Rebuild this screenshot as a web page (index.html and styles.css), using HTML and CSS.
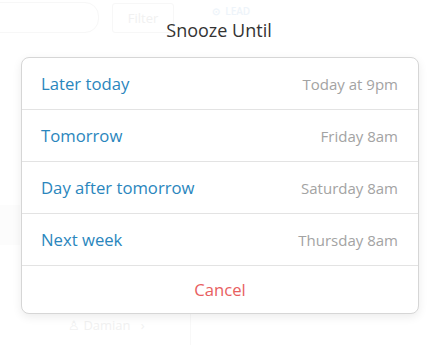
FILE: index.html
```html
<!DOCTYPE html>
<html>
<head>
<meta charset="utf-8">
<link rel="stylesheet" href="styles.css">
</head>
<body>
<div class="ghost">
  <div class="ghost-search"></div>
  <div class="ghost-filter">Filter</div>
  <div class="ghost-lead">⊙ &nbsp;LEAD</div>
  <div class="ghost-damian">♙ Damian &nbsp;&nbsp;›</div>
  <div class="ghost-vline2"></div>
  <div class="ghost-shade"></div>
</div>
<div class="sheet">
  <h1 class="title">Snooze Until</h1>
  <div class="card">
    <div class="row"><span class="label">Later today</span><span class="time">Today at 9pm</span></div>
    <div class="row"><span class="label">Tomorrow</span><span class="time">Friday 8am</span></div>
    <div class="row"><span class="label">Day after tomorrow</span><span class="time">Saturday 8am</span></div>
    <div class="row"><span class="label">Next week</span><span class="time">Thursday 8am</span></div>
    <div class="cancel">Cancel</div>
  </div>
</div>
</body>
</html>
```
FILE: styles.css
```css
html, body {
  margin: 0;
  padding: 0;
  background: #fff;
  width: 436px;
  height: 345px;
  overflow: hidden;
  font-family: "Open Sans", "Noto Sans", sans-serif;
}
body { position: relative; }
.ghost { position: absolute; inset: 0; }
.ghost-search {
  position: absolute; left: -20px; top: 2px; width: 119px; height: 31px;
  border: 1px solid #f7f7f7; border-radius: 14px; box-sizing: border-box;
}
.ghost-filter {
  position: absolute; left: 112px; top: 3px; width: 62px; height: 30px;
  border: 1px solid #f7f7f7; border-radius: 3px; box-sizing: border-box;
  color: #f1f1f1; font-size: 13px; line-height: 28px; text-align: center;
}
.ghost-lead {
  position: absolute; left: 212px; top: 4px; color: #eef4fa; font-size: 10px; font-weight: 600;
}
.ghost-damian {
  position: absolute; left: 68px; top: 316px; color: #f1f1f1; font-size: 13px;
}
.ghost-vline2 { position: absolute; left: 190px; top: 314px; width: 1px; height: 31px; background: #f8f8f8; }
.ghost-shade { position: absolute; left: 0; top: 205px; width: 20px; height: 40px; background: #fcfcfc; }

.sheet {
  position: relative;
  display: flex;
  flex-direction: column;
  align-items: center;
  padding-top: 18px;
  padding-left: 4px;
}
.title {
  margin: 0 0 15px -2px;
  font-size: 18px;
  font-weight: 500;
  color: #333;
  line-height: 24px;
}
.card {
  width: 398px;
  box-sizing: border-box;
  background: #fff;
  border: 1px solid #d6d6d6;
  border-radius: 8px;
  box-shadow: 0 3px 10px rgba(0,0,0,0.08);
}
.row {
  height: 52px;
  box-sizing: border-box;
  border-bottom: 1px solid #e3e3e3;
  display: flex;
  align-items: center;
  justify-content: space-between;
  padding: 0 20px 0 19px;
}
.label { color: #2a86bd; font-size: 16.7px; }
.time { color: #a3a3a3; font-size: 15px; }
.cancel {
  height: 47px;
  display: flex;
  align-items: center;
  justify-content: center;
  color: #e8605f;
  font-size: 16.7px;
}
```
